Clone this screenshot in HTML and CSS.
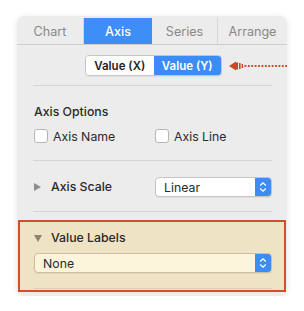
FILE: index.html
```html
<!DOCTYPE html>
<html>
<head>
<meta charset="utf-8">
<link rel="stylesheet" href="styles.css">
</head>
<body>
<div class="card">
  <div class="tabs">
    <div class="tab">Chart</div>
    <div class="tab active">Axis</div>
    <div class="tab">Series</div>
    <div class="tab">Arrange</div>
  </div>
  <div class="seg-row">
    <div class="seg">
      <div class="seg-item">Value (X)</div>
      <div class="seg-item on">Value (Y)</div>
    </div>
  </div>
  <svg class="pointer" width="58" height="10" viewBox="0 0 58 10">
    <polygon points="0,5 7,0.5 7,9.5" fill="#c8482a"/>
    <rect x="7" y="1.5" width="2" height="7" fill="#c8482a"/>
    <rect x="10" y="2" width="1.6" height="6" fill="#c8482a"/>
    <rect x="12.6" y="3" width="1.4" height="4" fill="#c8482a"/>
    <line x1="15.5" y1="5" x2="58" y2="5" stroke="#c8482a" stroke-width="2" stroke-dasharray="1.8 1.6"/>
  </svg>
  <div class="sep"></div>
  <div class="section-title">Axis Options</div>
  <div class="checks">
    <label class="check"><span class="box"></span>Axis Name</label>
    <label class="check"><span class="box"></span>Axis Line</label>
  </div>
  <div class="sep s2"></div>
  <div class="scale-row">
    <div class="disclosure"><span class="tri-right"></span>Axis Scale</div>
    <div class="select narrow"><span>Linear</span><span class="stepper"><svg width="8" height="12" viewBox="0 0 8 12"><path d="M1.2 4.5 L4 1.8 L6.8 4.5 M1.2 7.5 L4 10.2 L6.8 7.5" fill="none" stroke="#fff" stroke-width="1.3"/></svg></span></div>
  </div>
  <div class="sep s3"></div>
  <div class="highlight">
    <div class="disclosure open"><span class="tri-down"></span>Value Labels</div>
    <div class="select wide"><span>None</span><span class="stepper"><svg width="8" height="12" viewBox="0 0 8 12"><path d="M1.2 4.5 L4 1.8 L6.8 4.5 M1.2 7.5 L4 10.2 L6.8 7.5" fill="none" stroke="#fff" stroke-width="1.3"/></svg></span></div>
    <div class="sep inner"></div>
  </div>
</div>
</body>
</html>
```
FILE: styles.css
```css
* { box-sizing: border-box; }
html, body { margin: 0; padding: 0; background: #fff; }
body {
  font-family: "Inter", "Liberation Sans", sans-serif;
  font-size: 12.3px;
  color: #2a2a2a;
}
.card {
  position: relative;
  margin: 16px 0 0 17px;
  width: 270px;
  padding: 2px 0 4px;
  background: #ececec;
  border-radius: 8px;
  box-shadow: 0 1px 6px rgba(0,0,0,0.11);
}
.tabs {
  display: grid;
  grid-template-columns: 67px 68px 66px 69px;
  height: 27px;
  border-bottom: 1px solid #cdcdcd;
}
.tab {
  display: flex;
  align-items: center;
  justify-content: center;
  color: #888;
  font-size: 12.6px;
  border-right: 1px solid #d6d6d6;
}
.tab:last-child { border-right: none; }
.tab.active {
  background: #3d8ef6;
  color: #fff;
  font-weight: 500;
  border-right: none;
}
.seg-row {
  margin-top: 10px;
  padding-left: 68px;
}
.seg {
  display: flex;
  width: 137px;
  height: 21px;
  border-radius: 4px;
  overflow: hidden;
  border: 1px solid #c6c6c6;
  box-shadow: 0 1px 0 rgba(0,0,0,0.05);
}
.seg-item {
  flex: 1;
  display: flex;
  align-items: center;
  justify-content: center;
  background: #fff;
  font-size: 11.5px;
  font-weight: 600;
  color: #1e1e1e;
}
.seg-item.on {
  background: #3b8cf4;
  color: #fff;
}
.pointer {
  position: absolute;
  left: 212px;
  top: 45px;
}
.sep {
  height: 1px;
  background: #d4d4d4;
  margin: 9px 15px 0 16px;
}
.section-title {
  margin: 18px 0 0 17px;
  line-height: 16px;
  font-weight: 500;
}
.checks {
  display: flex;
  margin: 8px 0 0 17px;
  height: 16px;
}
.check {
  display: flex;
  align-items: center;
  gap: 5px;
  width: 121px;
}
.box {
  width: 14px;
  height: 14px;
  background: #fff;
  border: 1px solid #b5b5b5;
  border-radius: 3px;
}
.sep.s2 { margin-top: 16px; }
.scale-row {
  display: flex;
  align-items: center;
  margin: 16px 15px 0 16px;
  height: 20px;
}
.disclosure {
  display: flex;
  align-items: center;
  line-height: 16px;
  font-weight: 500;
  width: 122px;
}
.tri-right {
  width: 0;
  height: 0;
  border-top: 4.5px solid transparent;
  border-bottom: 4.5px solid transparent;
  border-left: 7px solid #8e8e8e;
  margin: 0 10px 0 1px;
}
.tri-down {
  width: 0;
  height: 0;
  border-left: 4.5px solid transparent;
  border-right: 4.5px solid transparent;
  border-top: 7px solid #8d8573;
  margin: 0 9px 0 0;
}
.select {
  display: flex;
  align-items: center;
  justify-content: space-between;
  height: 20px;
  border: 1px solid #c4c4c4;
  border-radius: 4px;
  background: #fff;
  overflow: hidden;
  box-shadow: 0 1px 0 rgba(0,0,0,0.05);
}
.select span:first-child { padding-left: 8px; }
.select.narrow { width: 117px; }
.stepper {
  width: 16px;
  height: 100%;
  background: #3b8cf4;
  display: flex;
  align-items: center;
  justify-content: center;
}
.sep.s3 { margin-top: 14px; }
.highlight {
  margin: 8px 1px 0 1px;
  border: 2px solid #d24f2e;
  background: #efe3c5;
  padding: 8px 12px 1px 14px;
}
.select.wide {
  margin-top: 7px;
  width: 238px;
  background: #fdf4dc;
  border-color: #cbbf9f;
}
.sep.inner {
  margin: 15px 0 0 0;
  background: #d9ceb2;
}
```
